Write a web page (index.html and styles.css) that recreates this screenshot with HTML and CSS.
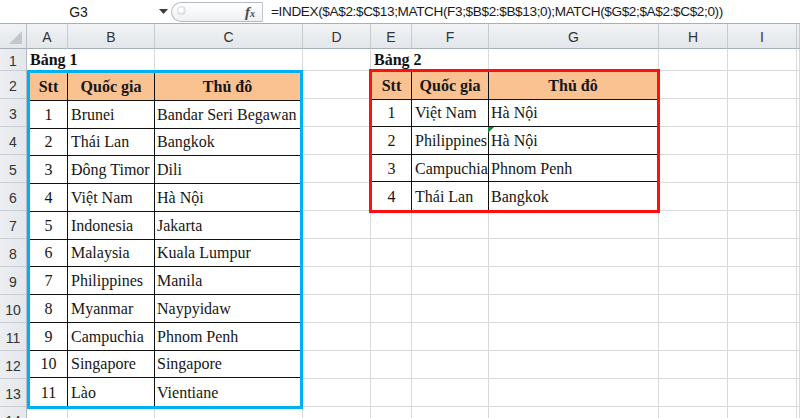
FILE: index.html
```html
<!DOCTYPE html>
<html>
<head>
<meta charset="utf-8">
<link rel="stylesheet" href="styles.css">
</head>
<body>
<div class="fbar">
  <div class="namebox">G3</div>
  <div class="nb-drop"><svg width="9" height="5" viewBox="0 0 9 5"><path d="M0 0h9L4.5 5z" fill="#3c3c3c"/></svg></div>
  <div class="fx-area"><span class="knob"></span><span class="fx">f<span class="fxx">x</span></span></div>
  <div class="formula">=INDEX($A$2:$C$13;MATCH(F3;$B$2:$B$13;0);MATCH($G$2;$A$2:$C$2;0))</div>
</div>
<div class="sheet">
  <div class="corner"><svg width="13" height="13" viewBox="0 0 13 13"><path d="M13 0V13H0z" fill="#c3c7cd"/></svg></div>
  <div class="ch">A</div><div class="ch">B</div><div class="ch">C</div><div class="ch">D</div><div class="ch">E</div><div class="ch">F</div><div class="ch">G</div><div class="ch">H</div><div class="ch">I</div><div class="ch"></div>

  <div class="rh">1</div><div class="c title">Bảng 1</div><div class="c"></div><div class="c"></div><div class="c title">Bảng 2</div><div class="c"></div><div class="c"></div><div class="c"></div><div class="c"></div>

  <div class="t1">
    <div class="tc th">Stt</div><div class="tc th">Quốc gia</div><div class="tc th">Thủ đô</div>
    <div class="tc num">1</div><div class="tc">Brunei</div><div class="tc">Bandar Seri Begawan</div>
    <div class="tc num">2</div><div class="tc">Thái Lan</div><div class="tc">Bangkok</div>
    <div class="tc num">3</div><div class="tc">Đông Timor</div><div class="tc">Dili</div>
    <div class="tc num">4</div><div class="tc">Việt Nam</div><div class="tc">Hà Nội</div>
    <div class="tc num">5</div><div class="tc">Indonesia</div><div class="tc">Jakarta</div>
    <div class="tc num">6</div><div class="tc">Malaysia</div><div class="tc">Kuala Lumpur</div>
    <div class="tc num">7</div><div class="tc">Philippines</div><div class="tc">Manila</div>
    <div class="tc num">8</div><div class="tc">Myanmar</div><div class="tc">Naypyidaw</div>
    <div class="tc num">9</div><div class="tc">Campuchia</div><div class="tc">Phnom Penh</div>
    <div class="tc num">10</div><div class="tc">Singapore</div><div class="tc">Singapore</div>
    <div class="tc num">11</div><div class="tc">Lào</div><div class="tc">Vientiane</div>
  </div>

  <div class="t2">
    <div class="tc th">Stt</div><div class="tc th">Quốc gia</div><div class="tc th">Thủ đô</div>
    <div class="tc num">1</div><div class="tc">Việt Nam</div><div class="tc">Hà Nội</div>
    <div class="tc num">2</div><div class="tc">Philippines</div><div class="tc flag">Hà Nội</div>
    <div class="tc num">3</div><div class="tc">Campuchia</div><div class="tc">Phnom Penh</div>
    <div class="tc num">4</div><div class="tc">Thái Lan</div><div class="tc">Bangkok</div>
  </div>

  <div class="rh">2</div><div class="c"></div><div class="c"></div><div class="c"></div><div class="c"></div>
  <div class="rh">3</div><div class="c"></div><div class="c"></div><div class="c"></div><div class="c"></div>
  <div class="rh">4</div><div class="c"></div><div class="c"></div><div class="c"></div><div class="c"></div>
  <div class="rh">5</div><div class="c"></div><div class="c"></div><div class="c"></div><div class="c"></div>
  <div class="rh">6</div><div class="c"></div><div class="c"></div><div class="c"></div><div class="c"></div>
  <div class="rh">7</div><div class="c"></div><div class="c"></div><div class="c"></div><div class="c"></div><div class="c"></div><div class="c"></div><div class="c"></div>
  <div class="rh">8</div><div class="c"></div><div class="c"></div><div class="c"></div><div class="c"></div><div class="c"></div><div class="c"></div><div class="c"></div>
  <div class="rh">9</div><div class="c"></div><div class="c"></div><div class="c"></div><div class="c"></div><div class="c"></div><div class="c"></div><div class="c"></div>
  <div class="rh">10</div><div class="c"></div><div class="c"></div><div class="c"></div><div class="c"></div><div class="c"></div><div class="c"></div><div class="c"></div>
  <div class="rh">11</div><div class="c"></div><div class="c"></div><div class="c"></div><div class="c"></div><div class="c"></div><div class="c"></div><div class="c"></div>
  <div class="rh">12</div><div class="c"></div><div class="c"></div><div class="c"></div><div class="c"></div><div class="c"></div><div class="c"></div><div class="c"></div>
  <div class="rh">13</div><div class="c"></div><div class="c"></div><div class="c"></div><div class="c"></div><div class="c"></div><div class="c"></div><div class="c"></div>
  <div class="rh rh-last">14</div><div class="c"></div><div class="c"></div><div class="c"></div><div class="c"></div><div class="c"></div><div class="c"></div><div class="c"></div><div class="c"></div><div class="c"></div><div class="c"></div>
</div>
</body>
</html>
```
FILE: styles.css
```css
* { box-sizing: border-box; }
body {
  margin: 0;
  width: 800px;
  height: 418px;
  overflow: hidden;
  background: #fff;
  font-family: "Liberation Serif", serif;
}
.fbar {
  display: flex;
  align-items: center;
  height: 24px;
  border-bottom: 1px solid #a9afb7;
  font-family: "Liberation Sans", Arial, sans-serif;
  color: #1a1a1a;
  background: #fff;
}
.namebox {
  width: 155px;
  text-align: center;
  font-size: 14px;
  padding-left: 2px;
}
.nb-drop {
  width: 16px;
  display: flex;
  justify-content: center;
  align-items: center;
}
.fx-area {
  width: 92px;
  height: 20px;
  margin-top: 1px;
  border: 1px solid #b4bac2;
  border-right: 1px solid #c4c8ce;
  border-radius: 10px 0 0 10px;
  background: linear-gradient(#ffffff, #eef0f2);
  display: flex;
  align-items: center;
  justify-content: space-between;
  padding: 0 7px 0 5px;
}
.knob {
  width: 9px;
  height: 9px;
  border-radius: 50%;
  background: radial-gradient(circle at 40% 40%, #ffffff 30%, #c9ced5 100%);
  border: 1px solid #d4d8de;
  margin-top: -4px;
}
.fx {
  font-family: "Liberation Serif", serif;
  font-style: italic;
  font-weight: bold;
  font-size: 15px;
  color: #4a4a4a;
}
.fxx { font-size: 10px; }
.formula {
  padding-left: 8px;
  font-size: 13.6px;
  letter-spacing: -0.38px;
  white-space: nowrap;
}
.sheet {
  display: grid;
  grid-template-columns: 27px 41px 87px 148px 68px 41px 77px 170px 69px 69px 1fr;
  grid-template-rows: 25px 22px repeat(13, 28px);
  height: 394px;
  overflow: hidden;
}
.corner, .ch, .rh {
  background: linear-gradient(#f1f3f5, #e3e6ea);
  font-family: "Liberation Sans", Arial, sans-serif;
  font-size: 14px;
  color: #333;
  display: flex;
  align-items: center;
  justify-content: center;
}
.corner {
  border-right: 1px solid #b8bec6;
  border-bottom: 1px solid #a8b0ba;
  align-items: flex-end;
  justify-content: flex-end;
  padding: 0 4px 4px 0;
}
.ch {
  border-right: 1px solid #c6cbd2;
  border-bottom: 1px solid #a8b0ba;
  padding-top: 1px;
}
.rh {
  background: linear-gradient(90deg, #eceef1, #e4e7eb);
  border-right: 1px solid #b3bac3;
  border-bottom: 1px solid #c8cdd3;
  padding-top: 3px;
}
.rh-last {
  align-items: flex-start;
  padding-top: 6px;
}
.c {
  border-right: 1px solid #dadada;
  border-bottom: 1px solid #dadada;
}
.c.title {
  grid-column: span 2;
  font-weight: bold;
  font-size: 16px;
  color: #111;
  display: flex;
  align-items: center;
  padding: 1px 0 0 3px;
}
.t1, .t2 {
  display: grid;
  background: #fff;
  z-index: 1;
}
.t1 {
  grid-column: 2 / 5;
  grid-row: 3 / 15;
  border: 3px solid #00b0f0;
  margin: -1px 0 -2px 0;
  grid-template-columns: 38px 87px 1fr;
  grid-template-rows: repeat(12, 1fr);
}
.t2 {
  grid-column: 6 / 9;
  grid-row: 3 / 8;
  border: 3px solid #ff1010;
  margin: -2px -1px -2px -2px;
  grid-template-columns: 40px 77px 1fr;
  grid-template-rows: repeat(5, 1fr);
}
.tc {
  border-right: 1px solid #111;
  border-bottom: 1px solid #111;
  display: flex;
  align-items: center;
  padding: 1px 0 0 3px;
  font-size: 16px;
  color: #161616;
  white-space: nowrap;
}
.tc:nth-child(3n) { border-right: 0; padding-left: 2px; }
.tc:nth-last-child(-n+3) { border-bottom: 0; }
.th {
  background: #fac191;
  font-weight: bold;
  justify-content: center;
  padding-left: 0;
}
.tc.th:nth-child(3n) { padding-left: 0; }
.num {
  justify-content: center;
  padding-left: 0;
}
.flag { position: relative; }
.flag::before {
  content: "";
  position: absolute;
  left: -1px;
  top: 0;
  border-top: 6px solid #168a2e;
  border-right: 6px solid transparent;
}
```
